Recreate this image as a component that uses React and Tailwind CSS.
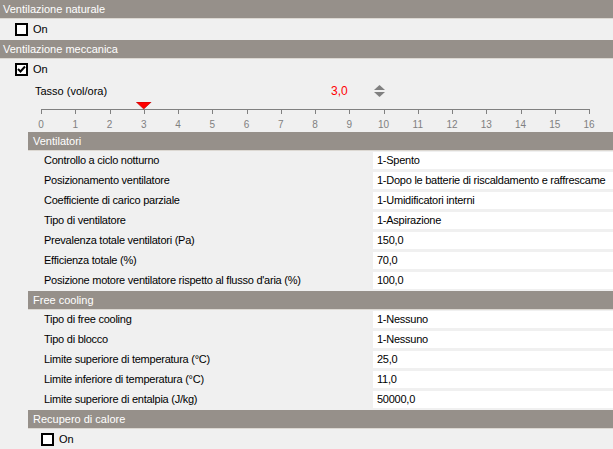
import React from 'react';

const font = { fontFamily: '"Liberation Sans", Arial, sans-serif' };

const ventilatori = [
  ['Controllo a ciclo notturno', '1-Spento'],
  ['Posizionamento ventilatore', '1-Dopo le batterie di riscaldamento e raffrescame'],
  ['Coefficiente di carico parziale', '1-Umidificatori interni'],
  ['Tipo di ventilatore', '1-Aspirazione'],
  ['Prevalenza totale ventilatori (Pa)', '150,0'],
  ['Efficienza totale (%)', '70,0'],
  ["Posizione motore ventilatore rispetto al flusso d'aria (%)", '100,0'],
];

const freeCooling = [
  ['Tipo di free cooling', '1-Nessuno'],
  ['Tipo di blocco', '1-Nessuno'],
  ['Limite superiore di temperatura (°C)', '25,0'],
  ['Limite inferiore di temperatura (°C)', '11,0'],
  ['Limite superiore di entalpia (J/kg)', '50000,0'],
];

function Header({ title, inset }) {
  return (
    <div className={`h-[19px] bg-[#96908a] border-b border-[#dcd8d2] flex items-center text-white ${inset ? 'ml-[28px] pl-[5px]' : 'pl-[3px]'}`}>
      {title}
    </div>
  );
}

function Checkbox({ checked, className }) {
  return (
    <div className={`flex items-center gap-[5px] h-[21px] ${className}`}>
      <div className="w-[13px] h-[13px] border-2 border-black bg-white flex items-center justify-center">
        {checked && (
          <svg width="9" height="9" viewBox="0 0 9 9">
            <path d="M1 4 L3.5 6.5 L8 1.5" stroke="black" strokeWidth="2" fill="none" />
          </svg>
        )}
      </div>
      <span className="text-black">On</span>
    </div>
  );
}

function Row({ label, value }) {
  return (
    <div className="h-[20px] flex items-start">
      <div className="w-[345px] pl-[16px] h-[19px] flex items-center whitespace-nowrap overflow-hidden tracking-[-0.25px]">{label}</div>
      <div className="flex-1 bg-white h-[17px] mt-[1px] pl-[4px] flex items-center whitespace-nowrap overflow-hidden tracking-[-0.25px]">
        {value}
      </div>
    </div>
  );
}

function Ruler() {
  const ticks = Array.from({ length: 17 }, (_, i) => i);
  const x0 = 41;
  const step = 548 / 16;
  const value = 3;
  const tx = x0 + value * step;
  return (
    <div className="h-[29px]">
      <svg width="613" height="15" className="block">
        <line x1={x0} y1="7.5" x2={x0 + 548} y2="7.5" stroke="#808080" strokeWidth="1" />
        {ticks.map((t) => (
          <line key={t} x1={Math.round(x0 + t * step) + 0.5} y1="7" x2={Math.round(x0 + t * step) + 0.5} y2="12" stroke="#808080" strokeWidth="1" />
        ))}
        <polygon points={`${tx - 7.5},0 ${tx + 7.5},0 ${tx},7`} fill="#ff0000" stroke="#b00000" strokeWidth="0.6" />
      </svg>
      <div className="ml-[41px] w-[548px] flex justify-between text-[10px] text-[#808080] leading-none mt-[3px]">
        {ticks.map((t) => (
          <div key={t} className="w-0 flex justify-center">
            <span>{t}</span>
          </div>
        ))}
      </div>
    </div>
  );
}

export default function App() {
  return (
    <div className="w-[613px] h-[449px] overflow-hidden bg-[#f0f0f0] text-[11px] text-black" style={font}>
      <Header title="Ventilazione naturale" />
      <Checkbox className="pl-[15px]" />
      <Header title="Ventilazione meccanica" />
      <Checkbox checked className="pl-[15px]" />

      <div className="h-[22px] flex items-center">
        <span className="pl-[35px] w-[331px]">Tasso (vol/ora)</span>
        <span className="text-[#ff0000] text-[12px] w-[43px]">3,0</span>
        <svg width="11" height="13" viewBox="0 0 11 13">
          <polygon points="5.5,0 11,5 0,5" fill="#808080" />
          <polygon points="0,7 11,7 5.5,12" fill="#808080" />
        </svg>
      </div>

      <Ruler />

      <div className="pt-[1px]">
        <Header title="Ventilatori" inset />
      </div>
      <div className="ml-[28px]">
        {ventilatori.map(([l, v]) => (
          <Row key={l} label={l} value={v} />
        ))}
      </div>

      <Header title="Free cooling" inset />
      <div className="ml-[28px]">
        {freeCooling.map(([l, v]) => (
          <Row key={l} label={l} value={v} />
        ))}
      </div>

      <Header title="Recupero di calore" inset />
      <Checkbox className="pl-[41px]" />
    </div>
  );
}
